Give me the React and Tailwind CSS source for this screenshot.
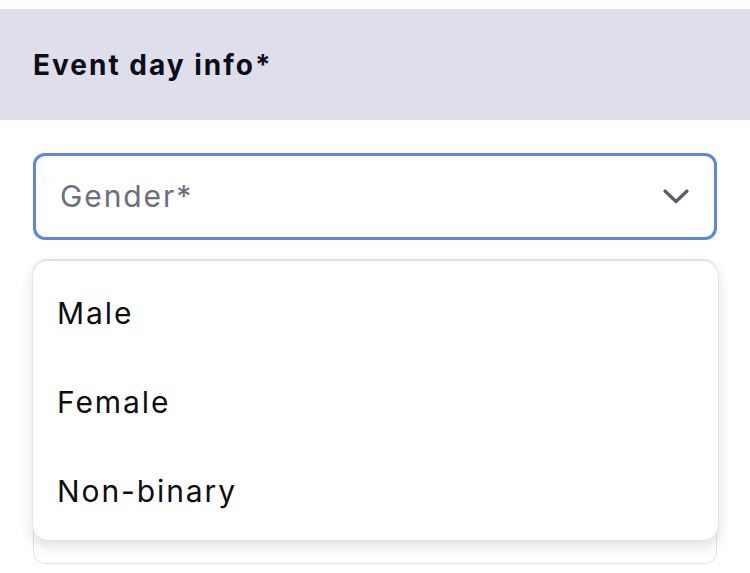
import React from 'react';

const options = ['Male', 'Female', 'Non-binary'];

const App = () => {
    return (
        <div className="w-[750px] h-[573px] bg-white pt-[9px] overflow-hidden" style={{ fontFamily: 'Inter, "Noto Sans", sans-serif' }}>
            {/* Section header */}
            <div className="h-[111px] bg-[#dfdeeb] flex items-center px-[33px]">
                <h2 className="text-[28px] font-bold text-[#0d0d1a] tracking-[2px]">Event day info*</h2>
            </div>

            <div className="relative px-[33px] pt-[33px]">
                {/* Select */}
                <div className="h-[87px] border-[3px] border-[#5b87de] rounded-[12px] flex items-center justify-between pl-[24px] pr-[25px]">
                    <span className="text-[30px] text-[#6b6e80] tracking-[1.9px]">Gender*</span>
                    <svg width="26" height="15" viewBox="0 0 26 15" fill="none">
                        <path d="M2 2 L13 12.5 L24 2" stroke="#5a5d70" strokeWidth="3.2" strokeLinecap="round" strokeLinejoin="round" />
                    </svg>
                </div>

                {/* Next field, behind the menu */}
                <div className="mt-[19px] h-[305px] border border-[#e2e2e2] rounded-[12px]"></div>

                {/* Dropdown menu */}
                <div className="absolute left-[32px] right-[31px] top-[140px] h-[281px] bg-white border border-[#e3e3e3] rounded-[16px] shadow-[0_6px_14px_rgba(0,0,0,0.12)] pt-[8px]">
                    {options.map((opt) => (
                        <div key={opt} className="h-[89px] flex items-center px-[24px]">
                            <span className="text-[30px] text-[#0d0d12] tracking-[1.9px]">{opt}</span>
                        </div>
                    ))}
                </div>
            </div>
        </div>
    );
};

export default App;
